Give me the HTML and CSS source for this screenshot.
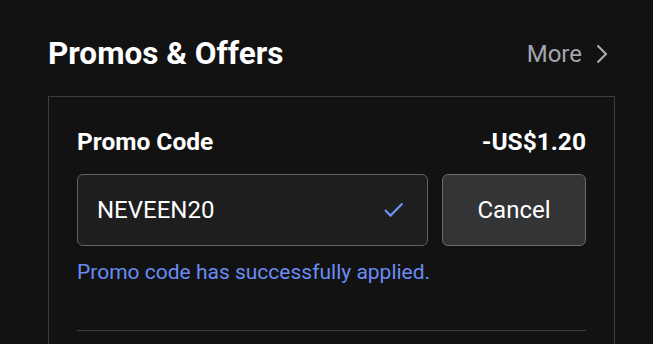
FILE: index.html
```html
<!DOCTYPE html>
<html>
<head>
<meta charset="utf-8">
<link rel="stylesheet" href="styles.css">
</head>
<body>
<div class="page">
  <div class="header">
    <h1 class="title">Promos &amp; Offers</h1>
    <a class="more">More
      <svg class="chev" width="12" height="20" viewBox="0 0 12 20"><path d="M1.5 1.5 L10 10 L1.5 18.5" fill="none" stroke="#b0b0b0" stroke-width="2"/></svg>
    </a>
  </div>
  <div class="card">
    <div class="row">
      <span class="label">Promo Code</span>
      <span class="amount">-US$1.20</span>
    </div>
    <div class="controls">
      <div class="input">
        <span class="code">NEVEEN20</span>
        <svg class="check" width="20" height="16" viewBox="0 0 20 16"><path d="M1 8 L6.5 13.5 L18.5 1.5" fill="none" stroke="#6f8ff5" stroke-width="2.3"/></svg>
      </div>
      <button class="cancel">Cancel</button>
    </div>
    <div class="msg">Promo code has successfully applied.</div>
    <div class="divider"></div>
  </div>
</div>
</body>
</html>
```
FILE: styles.css
```css
html, body {
  margin: 0;
  padding: 0;
  background: #121212;
  font-family: Roboto, "Noto Sans", sans-serif;
  color: #fff;
  overflow: hidden;
}
.page {
  width: 567px;
  padding: 35px 0 0 48px;
}
.header {
  display: flex;
  justify-content: space-between;
  align-items: center;
  height: 38px;
}
.title {
  margin: 0;
  font-size: 31.5px;
  line-height: 38px;
  font-weight: 700;
}
.more {
  display: flex;
  align-items: center;
  gap: 14px;
  color: #a3a6ab;
  font-size: 24px;
  line-height: 28px;
  margin-right: 7px;
}
.chev { display: block; }
.card {
  margin-top: 23px;
  border: 1px solid #3c3c3c;
  border-bottom: none;
  padding: 31px 28px 40px;
  height: 400px;
}
.row {
  display: flex;
  justify-content: space-between;
  align-items: center;
  font-size: 24.5px;
  line-height: 28px;
  font-weight: 700;
  height: 28px;
}
.controls {
  display: flex;
  gap: 14px;
  margin-top: 18px;
}
.input {
  flex: 1;
  height: 72px;
  box-sizing: border-box;
  border: 1px solid #626262;
  border-radius: 6px;
  background: #1e1e1e;
  display: flex;
  align-items: center;
  justify-content: space-between;
  padding: 0 23px 0 19px;
}
.code {
  font-size: 24px;
  line-height: 28px;
  color: #fff;
}
.check { display: block; }
.cancel {
  width: 144px;
  height: 72px;
  box-sizing: border-box;
  border: 1px solid #6a6a6a;
  border-radius: 6px;
  background: #333436;
  color: #fff;
  font-family: Roboto, "Noto Sans", sans-serif;
  font-size: 24px;
  line-height: 28px;
  padding: 0;
}
.msg {
  margin-top: 14px;
  font-size: 21px;
  line-height: 24px;
  color: #6a8cf4;
}
.divider {
  margin-top: 46px;
  height: 1px;
  background: #3e3e3e;
}
```
